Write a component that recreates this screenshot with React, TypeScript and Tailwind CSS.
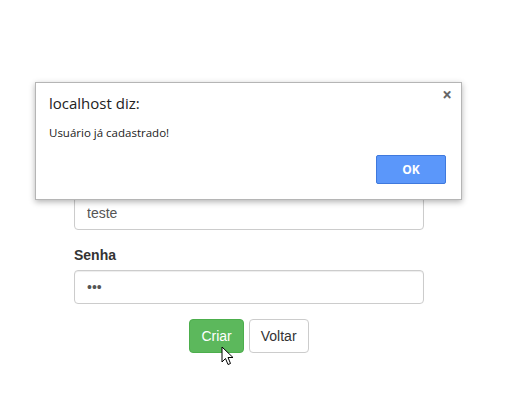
import { useState } from 'react';

function Field({ label, value, type }: { label: string; value: string; type: string }) {
  return (
    <div className="mb-[15px]">
      <label className="block text-[14px] leading-[20px] font-bold text-[#333] mb-[5px]">{label}</label>
      <input
        type={type}
        defaultValue={value}
        className="block w-full h-[34px] px-[12px] text-[14px] text-[#555] bg-white border border-[#ccc] rounded-[4px] shadow-[inset_0_1px_1px_rgba(0,0,0,0.075)] outline-none"
      />
    </div>
  );
}

export default function App() {
  const [open, setOpen] = useState(true);

  return (
    <div className="relative w-[505px] h-[410px] bg-white overflow-hidden font-['Liberation_Sans',Arial,sans-serif]">
      {/* form underneath */}
      <div className="w-[350px] ml-[74px] pt-[171px]">
        <Field label="Usuário" value="teste" type="text" />
        <Field label="Senha" value="abc" type="password" />
        <div className="flex justify-center gap-[5px]">
          <button className="h-[34px] px-[11px] text-[14px] text-white bg-[#5cb85c] border border-[#4cae4c] rounded-[4px]">
            Criar
          </button>
          <button className="h-[34px] px-[11px] text-[14px] text-[#333] bg-white border border-[#ccc] rounded-[4px]">
            Voltar
          </button>
        </div>
      </div>

      {/* browser alert */}
      {open && (
        <div className="absolute left-[35px] top-[82px] w-[427px] h-[118px] bg-white border border-[#b5b5b5] shadow-[0_2px_6px_rgba(0,0,0,0.3)] font-['Open_Sans',sans-serif]">
          <button
            onClick={() => setOpen(false)}
            className="absolute right-[9px] top-[3px] text-[#666] text-[17px] font-bold leading-none"
          >
            ×
          </button>
          <div className="pl-[13px] pt-[9px] text-[15px] leading-[22px] text-[#222]">localhost diz:</div>
          <div className="pl-[13px] pt-[11px] text-[11.5px] leading-[16px] text-[#222]">Usuário já cadastrado!</div>
          <div className="flex justify-end pr-[15px] pt-[14px]">
            <button
              onClick={() => setOpen(false)}
              className="w-[70px] h-[29px] text-[12px] font-bold text-white bg-[#5b97fa] border border-[#3f79dd] rounded-[2px]"
            >
              OK
            </button>
          </div>
        </div>
      )}

      {/* mouse cursor */}
      <svg className="absolute left-[221px] top-[346px]" width="14" height="21" viewBox="0 0 14 21">
        <path d="M1 1 L1 16 L4.5 12.5 L7 18.5 L9.5 17.5 L7 11.5 L12 11.5 Z" fill="white" stroke="black" strokeWidth="1" strokeLinejoin="round" />
      </svg>
    </div>
  );
}
